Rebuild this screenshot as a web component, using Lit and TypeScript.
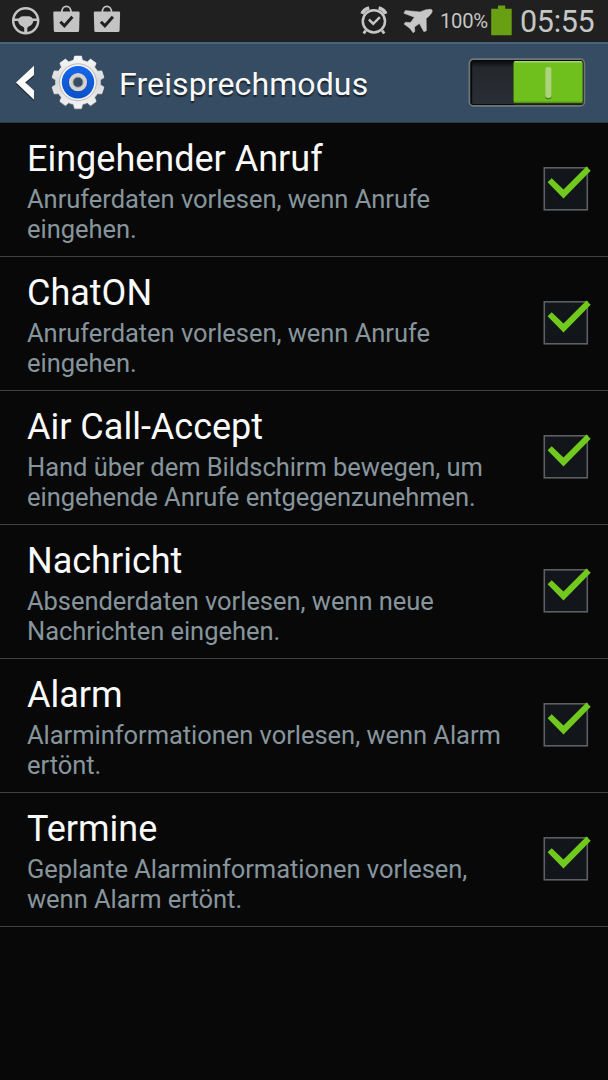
import { LitElement, html, svg, css } from "lit";
import { customElement, property } from "lit/decorators.js";

interface Item {
  title: string;
  lines: string[];
}

const ITEMS: Item[] = [
  { title: "Eingehender Anruf", lines: ["Anruferdaten vorlesen, wenn Anrufe", "eingehen."] },
  { title: "ChatON", lines: ["Anruferdaten vorlesen, wenn Anrufe", "eingehen."] },
  { title: "Air Call-Accept", lines: ["Hand über dem Bildschirm bewegen, um", "eingehende Anrufe entgegenzunehmen."] },
  { title: "Nachricht", lines: ["Absenderdaten vorlesen, wenn neue", "Nachrichten eingehen."] },
  { title: "Alarm", lines: ["Alarminformationen vorlesen, wenn Alarm", "ertönt."] },
  { title: "Termine", lines: ["Geplante Alarminformationen vorlesen,", "wenn Alarm ertönt."] },
];

const gearPath = (cx: number, cy: number, teeth: number, outer: number, inner: number): string => {
  const step = (Math.PI * 2) / teeth;
  const at = (angle: number, r: number) =>
    `${(cx + r * Math.sin(angle)).toFixed(2)} ${(cy - r * Math.cos(angle)).toFixed(2)}`;
  let d = "";
  for (let i = 0; i < teeth; i++) {
    const a = i * step;
    d += `${i ? "L" : "M"}${at(a - 0.2, inner)}L${at(a - 0.13, outer)}L${at(a + 0.13, outer)}L${at(a + 0.2, inner)}`;
    d += `A${inner} ${inner} 0 0 1 ${at(a + step - 0.2, inner)}`;
  }
  return d + "Z";
};

@customElement("status-bar")
class StatusBar extends LitElement {
  static styles = css`
    :host {
      display: flex;
      align-items: flex-start;
      height: 42px;
      background: #1f201f;
      color: #c6c6c6;
    }
    svg { display: block; flex: none; }
    .spacer { flex: 1; }
    .percent {
      box-sizing: border-box;
      width: 52px;
      padding-left: 1px;
      font-size: 20.3px;
      line-height: 42px;
      letter-spacing: -0.3px;
      white-space: nowrap;
    }
    .clock {
      width: 88px;
      font-size: 30.5px;
      line-height: 43px;
      letter-spacing: -0.3px;
      white-space: nowrap;
    }
  `;

  render() {
    const bag = (x: number) => svg`
      <g transform="translate(${x} 0)">
        <path d="M8.4 12.5 C8.4 4.3 17.6 4.3 17.6 12.5" fill="none" stroke="#c4c4c4" stroke-width="1.7" />
        <path d="M1 11.5 H25 Q26.3 11.5 26.2 12.8 L25.7 30.5 Q25.6 32 24.2 32 H1.8 Q.4 32 .4 30.5 L-.1 12.8 Q-.1 11.5 1 11.5Z" fill="#c4c4c4" />
        <path d="M7 21.8 L11 25.8 L19 16.8" fill="none" stroke="#1f201f" stroke-width="3" />
      </g>`;
    return html`
      <svg width="130" height="42" viewBox="0 0 130 42">
        <circle cx="25.7" cy="20.8" r="12.5" fill="none" stroke="#c4c4c4" stroke-width="2.5" />
        <path d="M14 18.4 H18.6 Q20.5 16.2 23 16.2 H28.5 Q31 16.2 32.8 18.4 H37.4 V20.9 H33.4 Q32.4 25 28.6 26.4 L27.3 28 V33 H24.2 V28 L22.8 26.4 Q19 25 18 20.9 H14Z" fill="#c4c4c4" />
        ${bag(53.4)} ${bag(93.9)}
      </svg>
      <div class="spacer"></div>
      <svg width="82" height="42" viewBox="0 0 82 42">
        <g fill="none" stroke="#c6c6c6" transform="translate(1.2 0)">
          <circle cx="15.7" cy="21.3" r="11.1" stroke-width="2.5" />
          <path d="M10.7 19.5 L15 23.8 L21.7 17.2" stroke-width="2.5" />
          <path d="M7.5 30.5 L5.5 33.5 M24 30.5 L26 33.5" stroke-width="2.8" />
          <path d="M4 13.8 Q5.6 9.2 11 8" stroke-width="3.8" />
          <path d="M27.4 13.8 Q25.8 9.2 20.4 8" stroke-width="3.8" />
        </g>
        <path d="M73.6 9.3 Q76 9.7 75 12.2 Q74 14.5 69.2 18.6 L69.4 30.7 L66.9 31.8 L62.4 23.6 L57.5 27 L57.8 31.4 L56.2 32.8 L53 28.4 L47 24 L48.4 22.3 L53.6 22.5 L57.4 17.2 L46.8 13.2 L48.4 10.5 L63 11.9 Q69.5 8.8 73.6 9.3Z" fill="#c6c6c6" stroke="#c6c6c6" stroke-width=".5" stroke-linejoin="round" />
      </svg>
      <span class="percent">100%</span>
      <svg width="29" height="42" viewBox="0 0 29 42">
        <path d="M7 5.5 H14.2 V8.7 H20.7 V35.3 H.2 V8.7 H7Z" fill="#699f12" />
      </svg>
      <span class="clock">05:55</span>
    `;
  }
}

@customElement("toggle-switch")
class ToggleSwitch extends LitElement {
  static styles = css`
    :host { display: block; width: 118px; height: 50px; }
    svg { display: block; }
  `;

  render() {
    return html`
      <svg width="118" height="50" viewBox="0 0 118 50">
        <defs>
          <linearGradient id="well" x1="0" y1="0" x2="0" y2="1">
            <stop offset="0" stop-color="#08090a" />
            <stop offset=".16" stop-color="#24282c" />
            <stop offset="1" stop-color="#2a2e35" />
          </linearGradient>
        </defs>
        <rect x="1.4" y="1.2" width="115" height="46.7" rx="4" fill="#090a0b" stroke="#717779" stroke-width="1.7" />
        <rect x="4.2" y="2.5" width="42" height="43.5" rx="1" fill="url(#well)" />
        <rect x="45" y="3" width="70.2" height="43.5" rx="2" fill="#26361b" />
        <rect x="45.6" y="3" width="69" height="41.7" rx="2" fill="#6fc01d" />
        <rect x="46.5" y="3.1" width="67.2" height="1.5" rx=".7" fill="#a3d572" />
        <rect x="45.6" y="43.6" width="69" height="1.2" fill="#55921a" />
        <rect x="77.2" y="10" width="6.4" height="31.4" rx="3.2" fill="#4c8217" />
        <rect x="77.2" y="9" width="6.4" height="31" rx="3.2" fill="#acd579" />
      </svg>
    `;
  }
}

@customElement("title-bar")
class TitleBar extends LitElement {
  static styles = css`
    :host {
      display: flex;
      align-items: flex-start;
      box-sizing: border-box;
      height: 81px;
      padding-right: 22px;
      background: #354c62;
      border-top: 2px solid #49647a;
      border-bottom: 1px solid #30373d;
    }
    svg { display: block; flex: none; }
    h1 {
      flex: 1;
      margin: 0;
      font-size: 32px;
      font-weight: 400;
      line-height: 80px;
      letter-spacing: 0.12px;
      color: #fafafa;
      text-shadow: 0 2px 1px #18222b;
      white-space: nowrap;
    }
    toggle-switch { margin-top: 14px; }
  `;

  render() {
    const gear = gearPath(78, 38.2, 10, 26.3, 22.3);
    return html`
      <svg width="119" height="78" viewBox="0 0 119 78">
        <defs>
          <linearGradient id="metal" x1="0" y1="0" x2="0" y2="1">
            <stop offset="0" stop-color="#fafafa" />
            <stop offset=".5" stop-color="#d8d8d8" />
            <stop offset="1" stop-color="#f4f4f4" />
          </linearGradient>
          <linearGradient id="blue" x1="0" y1="0" x2="0" y2="1">
            <stop offset="0" stop-color="#1468ec" />
            <stop offset="1" stop-color="#0c50c8" />
          </linearGradient>
        </defs>
        <path d="M34 21.8 V31 L25.2 38.6 L34 46.6 V55.8 L16 38.6Z" fill="#1c2833" transform="translate(0 1.5)" />
        <path d="M34 21.8 V31 L25.2 38.6 L34 46.6 V55.8 L16 38.6Z" fill="#fcfcfc" />
        <path d=${gear} fill="#66717a" stroke="#66717a" stroke-linejoin="round" transform="translate(0 .8)" />
        <path d=${gear} fill="url(#metal)" stroke="#eeeeee" stroke-width=".7" stroke-linejoin="round" />
        <circle cx="78" cy="38.2" r="18.4" fill="#f4f4f4" stroke="#b9b9b9" stroke-width="1" />
        <circle cx="78" cy="38.2" r="16.2" fill="url(#blue)" />
        <circle cx="78" cy="38.5" r="9.6" fill="#1147a0" />
        <circle cx="78" cy="38.2" r="7" fill="#354c62" stroke="#d3d3d3" stroke-width="4.2" />
        <circle cx="78" cy="38.2" r="5.1" fill="none" stroke="#969b9e" stroke-width=".8" />
      </svg>
      <h1>Freisprechmodus</h1>
      <toggle-switch></toggle-switch>
    `;
  }
}

@customElement("setting-row")
class SettingRow extends LitElement {
  @property({ attribute: false }) item!: Item;

  static styles = css`
    :host {
      display: flex;
      align-items: flex-start;
      box-sizing: border-box;
      height: 133.95px;
      padding: 14px 17px 0 27px;
      border-bottom: 1px solid #414141;
    }
    .text { flex: 1; white-space: nowrap; }
    .title {
      font-size: 36px;
      line-height: 44px;
      color: #fafafa;
    }
    .line {
      font-size: 25.5px;
      line-height: 30px;
      letter-spacing: -0.04px;
      color: #87959c;
    }
    .title + .line { margin-top: 3px; }
    svg { display: block; flex: none; margin-top: 26px; }
  `;

  render() {
    return html`
      <div class="text">
        <div class="title">${this.item.title}</div>
        ${this.item.lines.map((l) => html`<div class="line">${l}</div>`)}
      </div>
      <svg width="50" height="50" viewBox="541 163 50 50">
        <rect x="544.3" y="167.8" width="43" height="42" fill="#12151a" stroke="#5c6062" stroke-width="1.6" />
        <path d="M547.6 182.3 L551.7 178.2 L563.5 189.5 L586.5 166.5 L590.7 170.7 L563.5 198.4Z" fill="#71c91e" />
      </svg>
    `;
  }
}

@customElement("app-root")
class AppRoot extends LitElement {
  static styles = css`
    :host {
      display: flex;
      flex-direction: column;
      height: 1080px;
      overflow: hidden;
      background: #080808;
      font-family: Roboto, "Liberation Sans", sans-serif;
    }
  `;

  render() {
    return html`
      <status-bar></status-bar>
      <title-bar></title-bar>
      <main>${ITEMS.map((item) => html`<setting-row .item=${item}></setting-row>`)}</main>
    `;
  }
}
